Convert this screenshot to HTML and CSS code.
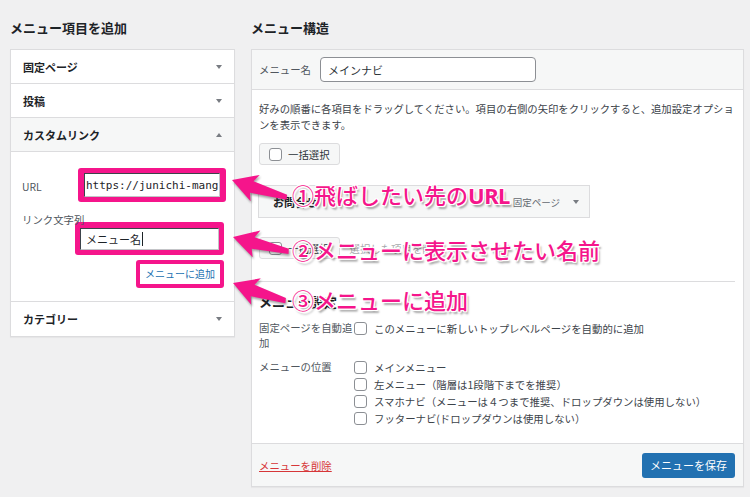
FILE: index.html
```html
<!DOCTYPE html>
<html lang="ja">
<head>
<meta charset="utf-8">
<title>メニュー</title>
<link rel="stylesheet" href="styles.css">
</head>
<body>
<div class="page">
  <div class="col-left">
    <h2 class="col-title">メニュー項目を追加</h2>
    <div class="acc">
      <div class="acc-row"><span>固定ページ</span><i class="tri down"></i></div>
      <div class="acc-row"><span>投稿</span><i class="tri down"></i></div>
      <div class="acc-row open"><span>カスタムリンク</span><i class="tri up"></i></div>
      <div class="acc-body">
        <div class="field">
          <span class="field-label">URL</span>
          <span class="mark mark-url"><span class="input mono">https://junichi-mang</span></span>
        </div>
        <div class="field-text">
          <span class="field-label">リンク文字列</span>
          <span class="mark mark-text"><span class="input">メニュー名<i class="caret"></i></span></span>
        </div>
        <div class="add-row"><span class="mark mark-btn"><span class="add-btn">メニューに追加</span></span></div>
      </div>
      <div class="acc-row last"><span>カテゴリー</span><i class="tri down"></i></div>
    </div>
  </div>
  <div class="col-right">
    <h2 class="col-title">メニュー構造</h2>
    <div class="menu-box">
      <div class="menu-head">
        <span class="head-label">メニュー名</span>
        <span class="name-input">メインナビ</span>
      </div>
      <div class="menu-body">
        <p class="desc">好みの順番に各項目をドラッグしてください。項目の右側の矢印をクリックすると、追加設定オプションを表示できます。</p>
        <div class="bulk-row first"><span class="bulk"><span class="cb"></span>一括選択</span></div>
        <div class="item"><span class="item-title">お問合せ</span><span class="item-type">固定ページ</span><i class="tri down"></i></div>
        <div class="bulk-row"><span class="bulk"><span class="cb"></span>一括選択</span><span class="bulk-del">選択した項目を削除</span></div>
        <div class="sep"></div>
        <h3 class="set-title">メニュー設定</h3>
        <div class="set-row">
          <span class="set-label">固定ページを自動追加</span>
          <div class="set-opts">
            <label class="opt one"><span class="cb"></span>このメニューに新しいトップレベルページを自動的に追加</label>
          </div>
        </div>
        <div class="set-row second">
          <span class="set-label">メニューの位置</span>
          <div class="set-opts multi">
            <label class="opt"><span class="cb"></span>メインメニュー</label>
            <label class="opt"><span class="cb"></span>左メニュー（階層は1段階下までを推奨）</label>
            <label class="opt"><span class="cb"></span>スマホナビ（メニューは４つまで推奨、ドロップダウンは使用しない）</label>
            <label class="opt"><span class="cb"></span>フッターナビ(ドロップダウンは使用しない）</label>
          </div>
        </div>
      </div>
      <div class="menu-foot">
        <span class="del-link">メニューを削除</span>
        <span class="save-btn">メニューを保存</span>
      </div>
    </div>
  </div>
</div>

<svg class="arrows" width="750" height="497" viewBox="0 0 750 497">
  <g fill="#f5158b">
    <polygon transform="translate(232,180) rotate(17)" points="0,0 25,-13 21,-5 57,-2 58,3 21,7 24,15"/>
    <polygon transform="translate(233,237) rotate(14)" points="0,0 25,-13 21,-5 57,-2 58,3 21,7 24,15"/>
    <polygon transform="translate(233,283) rotate(18)" points="0,0 25,-13 21,-5 55,-2 56,3 21,7 24,15"/>
  </g>
</svg>
<div class="note n1">①飛ばしたい先の<b>URL</b></div>
<div class="note n2">②メニューに表示させたい名前</div>
<div class="note n3">③メニューに追加</div>
</body>
</html>
```
FILE: styles.css
```css
* { box-sizing: border-box; }
html, body { margin: 0; }
body {
  position: relative;
  width: 750px;
  height: 497px;
  overflow: hidden;
  background: #f0f0f1;
  font-family: "Noto Sans CJK JP", "Noto Sans", sans-serif;
  color: #3c434a;
}
.page {
  display: flex;
  gap: 16px;
  padding: 19px 0 0 10px;
}
.col-left { width: 225px; }
.col-right { width: 493px; }
.col-title {
  margin: 0 0 12px;
  font-size: 13px;
  line-height: 18px;
  font-weight: 700;
  color: #1d2327;
}

/* accordion */
.acc {
  background: #fff;
  border: 1px solid #dcdcde;
  box-shadow: 0 1px 1px rgba(0,0,0,.04);
}
.acc-row {
  height: 34px;
  border-bottom: 1px solid #dcdcde;
  display: flex;
  align-items: center;
  justify-content: space-between;
  padding: 0 12px;
  font-size: 11px;
  font-weight: 700;
  color: #1d2327;
}
.acc-row.open { background: #f6f7f7; }
.acc-row.last { border-bottom: 0; }
.tri {
  display: inline-block;
  width: 0;
  height: 0;
  border-left: 3.5px solid transparent;
  border-right: 3.5px solid transparent;
}
.tri.down { border-top: 4px solid #787c82; }
.tri.up { border-bottom: 4px solid #787c82; }

.acc-body {
  border-bottom: 1px solid #dcdcde;
  padding: 16px 9px 13px 11px;
}
.field { display: flex; align-items: center; }
.field-label {
  font-size: 10.4px;
  line-height: 16px;
  color: #50575e;
}
.field .field-label { width: 56px; margin-top: 3px; }
.mark {
  display: block;
  background: #f5158b;
  border-radius: 3px;
  padding: 5px 6px;
}
.mark-url { width: 148px; margin-right: -2px; }
.input {
  display: flex;
  align-items: center;
  height: 24px;
  background: #fff;
  border: 1px solid #3c434a;
  border-right-color: #c3c4c7;
  border-bottom-color: #c3c4c7;
  overflow: hidden;
  white-space: nowrap;
  font-size: 11px;
  color: #1d2327;
}
.mono {
  font-family: "DejaVu Sans Mono", "Liberation Mono", monospace;
  padding-left: 1px;
}
.field-text { margin-top: 10px; }
.field-text .field-label { display: block; }
.mark-text {
  width: 149px;
  margin: -6px 0 0 53px;
  padding: 6px 5px 5px;
}
.mark-text .input { height: 22px; padding-left: 5px; }
.caret {
  display: inline-block;
  width: 1px;
  height: 14px;
  margin-left: 1px;
  background: #1d2327;
}
.add-row {
  display: flex;
  justify-content: flex-end;
  margin-top: 5px;
  padding-right: 1px;
}
.mark-btn { padding: 4px; }
.add-btn {
  display: block;
  height: 20px;
  line-height: 20px;
  padding: 0 5px;
  background: #fff;
  color: #2271b1;
  font-size: 10px;
}

/* right */
.menu-box {
  background: #fff;
  border: 1px solid #dcdcde;
  box-shadow: 0 1px 1px rgba(0,0,0,.04);
}
.menu-head {
  height: 40px;
  display: flex;
  align-items: center;
  padding-left: 7px;
  background: #f6f7f7;
  border-bottom: 1px solid #dcdcde;
}
.head-label {
  width: 61px;
  font-size: 10.4px;
  color: #50575e;
}
.name-input {
  display: flex;
  align-items: center;
  width: 216px;
  height: 25px;
  padding-left: 7px;
  background: #fff;
  border: 1px solid #8c8f94;
  border-radius: 4px;
  font-size: 11px;
  color: #2c3338;
}
.menu-body { padding: 11px 8px 16px 7px; }
.desc {
  margin: 0;
  font-size: 10.35px;
  line-height: 16px;
  color: #3c434a;
  line-break: anywhere;
}
.bulk-row {
  display: flex;
  align-items: center;
  gap: 10px;
  margin-top: 19px;
}
.bulk-row.first { margin-top: 10px; }
.bulk {
  display: inline-flex;
  align-items: center;
  gap: 6px;
  height: 22px;
  padding: 0 9px;
  background: #f6f7f7;
  border: 1px solid #dcdcde;
  border-radius: 3px;
  font-size: 10.4px;
  color: #2c3338;
}
.bulk-del { font-size: 10.4px; color: #a7aaad; }
.cb {
  display: inline-block;
  flex: none;
  width: 13px;
  height: 13px;
  background: #fff;
  border: 1px solid #8c8f94;
  border-radius: 3px;
}
.item {
  display: flex;
  align-items: center;
  width: 332px;
  height: 33px;
  margin: 20px 0 0 -1px;
  padding: 0 10px 0 14px;
  background: #f6f7f7;
  border: 1px solid #dcdcde;
}
.item-title { font-size: 11px; font-weight: 700; color: #1d2327; }
.item-type { margin-left: auto; margin-right: 13px; font-size: 9.5px; color: #646970; }
.sep {
  margin: 22px 0 0 -1px;
  border-top: 1px solid #dcdcde;
}
.set-title {
  margin: 11px 0 0;
  font-size: 13px;
  line-height: 18px;
  font-weight: 700;
  color: #1d2327;
}
.set-row { display: flex; margin-top: 10px; }
.set-label {
  width: 95px;
  font-size: 10.4px;
  line-height: 14.5px;
  color: #50575e;
}
.set-opts { display: flex; flex-direction: column; }
.set-opts.multi { margin-top: -1px; }
.opt {
  display: flex;
  align-items: center;
  gap: 7px;
  height: 17px;
  font-size: 10.4px;
  color: #3c434a;
  white-space: nowrap;
}
.opt.one { height: 14.5px; }

.menu-foot {
  display: flex;
  align-items: center;
  justify-content: space-between;
  height: 43px;
  padding: 0 8px 0 7px;
  background: #f6f7f7;
  border-top: 1px solid #dcdcde;
}
.del-link {
  font-size: 10.4px;
  color: #d63638;
  text-decoration: underline;
}
.save-btn {
  display: flex;
  align-items: center;
  justify-content: center;
  width: 93px;
  height: 25px;
  background: #2271b1;
  border-radius: 3px;
  color: #fff;
  font-size: 11px;
}

/* annotations */
.arrows {
  position: absolute;
  left: 0;
  top: 0;
  pointer-events: none;
  filter: drop-shadow(1px 2px 1px rgba(0,0,0,.35));
}
.note {
  position: absolute;
  left: 292px;
  font-size: 22px;
  line-height: 22px;
  font-weight: 500;
  color: #f5158b;
  white-space: nowrap;
  text-shadow:
    -1px -1px 0 #fff, 1px -1px 0 #fff, -1px 1px 0 #fff, 1px 1px 0 #fff,
    0 -1px 0 #fff, 0 1px 0 #fff, -1px 0 0 #fff, 1px 0 0 #fff,
    2px 3px 2px rgba(0,0,0,.35);
}
.note b { font-weight: 700; font-family: "Noto Sans", sans-serif; letter-spacing: -0.5px; }
.n1 { top: 183px; }
.n2 { top: 238px; }
.n3 { top: 288px; }
```
